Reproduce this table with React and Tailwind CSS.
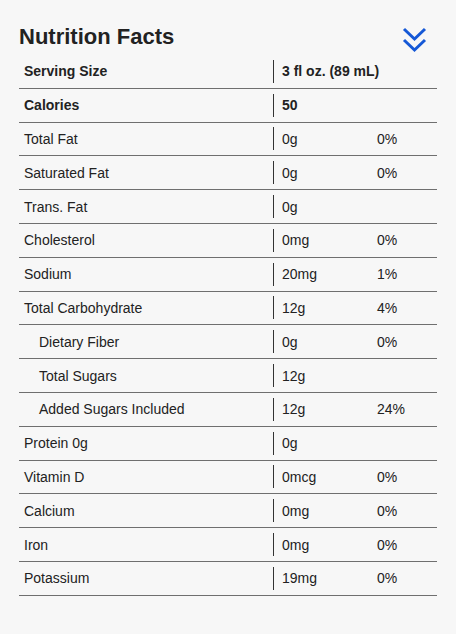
import React from "react";

const rows = [
  { label: "Serving Size", value: "3 fl oz. (89 mL)", bold: true },
  { label: "Calories", value: "50", bold: true },
  { label: "Total Fat", value: "0g", pct: "0%" },
  { label: "Saturated Fat", value: "0g", pct: "0%" },
  { label: "Trans. Fat", value: "0g" },
  { label: "Cholesterol", value: "0mg", pct: "0%" },
  { label: "Sodium", value: "20mg", pct: "1%" },
  { label: "Total Carbohydrate", value: "12g", pct: "4%" },
  { label: "Dietary Fiber", value: "0g", pct: "0%", indent: true },
  { label: "Total Sugars", value: "12g", indent: true },
  { label: "Added Sugars Included", value: "12g", pct: "24%", indent: true },
  { label: "Protein 0g", value: "0g" },
  { label: "Vitamin D", value: "0mcg", pct: "0%" },
  { label: "Calcium", value: "0mg", pct: "0%" },
  { label: "Iron", value: "0mg", pct: "0%" },
  { label: "Potassium", value: "19mg", pct: "0%" },
];

export default function App() {
  return (
    <div
      className="min-h-[634px] w-full bg-[#f7f7f7] text-[#222222]"
      style={{ fontFamily: '"Liberation Sans", Arial, sans-serif' }}
    >
      <div className="pl-[19px] pt-[24px] w-[437px]">
        <div className="flex justify-between items-start h-[26px]">
          <h1 className="text-[22px] leading-[26px] font-bold text-[#222222]">Nutrition Facts</h1>
          <svg
            width="26"
            height="28"
            viewBox="0 0 26 28"
            className="mr-[10px] mt-[1px] shrink-0"
            fill="none"
            stroke="#1558d6"
            strokeWidth="3"
          >
            <path d="M3 4 L13.5 14 L24 4" />
            <path d="M3 15 L13.5 25 L24 15" />
          </svg>
        </div>
        <div className="mt-[5px]">
          {rows.map((r, i) => (
            <div
              key={i}
              className={`flex items-center h-[33.8px] border-b border-[#6f6f6f] text-[14px] leading-[16px] ${r.bold ? "font-bold" : ""}`}
            >
              <div className={`w-[254px] shrink-0 ${r.indent ? "pl-[20px]" : "pl-[5px]"}`}>{r.label}</div>
              <div className="w-px h-[23px] shrink-0 bg-[#333333]" />
              <div className="w-[103px] shrink-0 pl-[8px] whitespace-nowrap">{r.value}</div>
              <div className="flex-1">{r.pct || ""}</div>
            </div>
          ))}
        </div>
      </div>
    </div>
  );
}
